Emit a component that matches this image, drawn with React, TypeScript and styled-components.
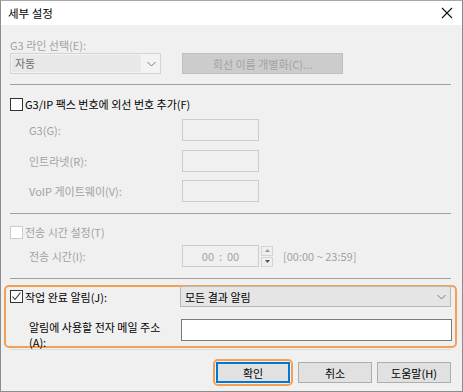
import styled, { createGlobalStyle } from "styled-components";

const GlobalStyle = createGlobalStyle`
  html, body { margin: 0; padding: 0; background: #ffffff; }
  * { box-sizing: border-box; }
`;

const font = `"Noto Sans CJK KR", "Noto Sans", sans-serif`;
const disabledText = "#a2a2a2";

const Window = styled.div`
  width: 463px;
  height: 392px;
  border: 1px solid #8c8c8c;
  border-top-color: #a8a8a8;
  background: #f0f0f0;
  display: flex;
  flex-direction: column;
  font-family: ${font};
  font-size: 11px;
  line-height: 14px;
  color: #000;
`;

const TitleBar = styled.div`
  height: 24px;
  background: #ffffff;
  display: flex;
  align-items: center;
  justify-content: space-between;
  padding: 0 7px 0 7px;
  font-size: 11.5px;
  flex-shrink: 0;
`;

const CloseIcon = styled.svg`
  width: 12px;
  height: 12px;
  margin-right: 2px;
`;

const Body = styled.div`
  flex: 1;
  padding: 0 11px 0 9px;
  display: flex;
  flex-direction: column;
`;

const Label = styled.div<{ $disabled?: boolean; $top?: number; $width?: number }>`
  color: ${(p) => (p.$disabled ? disabledText : "#000")};
  margin-top: ${(p) => p.$top ?? 0}px;
  width: ${(p) => (p.$width ? `${p.$width}px` : "auto")};
  white-space: nowrap;
`;

const Row = styled.div<{ $top?: number; $align?: string }>`
  display: flex;
  align-items: ${(p) => p.$align ?? "center"};
  margin-top: ${(p) => p.$top ?? 0}px;
`;

const Select = styled.div<{ $width: number; $disabled?: boolean }>`
  width: ${(p) => p.$width}px;
  height: 21px;
  border: 1px solid ${(p) => (p.$disabled ? "#d4d4d4" : "#b8b8b8")};
  background: ${(p) => (p.$disabled ? "#f3f3f3" : "#e5e5e5")};
  display: flex;
  align-items: center;
  justify-content: space-between;
  padding: 0 4px 0 4px;
  color: ${(p) => (p.$disabled ? "#6d6d6d" : "#000")};
`;

const SelectValue = styled.span<{ $disabled?: boolean }>`
  background: ${(p) => (p.$disabled ? "#e8e8e8" : "transparent")};
  flex: 1;
  height: 17px;
  line-height: 17px;
  margin-left: -3px;
  padding-left: 3px;
  margin-right: 6px;
`;

const Chevron = styled.svg`
  width: 9px;
  height: 6px;
  flex-shrink: 0;
`;

const DisabledButton = styled.div`
  width: 161px;
  height: 21px;
  margin-left: 21px;
  border: 1px solid #bfbfbf;
  background: #cccccc;
  color: ${disabledText};
  display: flex;
  align-items: center;
  justify-content: center;
`;

const Separator = styled.div<{ $top: number; $light?: boolean }>`
  height: 1px;
  margin-top: ${(p) => p.$top}px;
  background: ${(p) => (p.$light ? "#dcdcdc" : "#a0a0a0")};
`;

const Check = styled.span<{ $disabled?: boolean }>`
  width: 13px;
  height: 13px;
  border: 1px solid ${(p) => (p.$disabled ? "#cccccc" : "#333333")};
  background: #ffffff;
  display: inline-flex;
  align-items: center;
  justify-content: center;
  margin-right: 2px;
  flex-shrink: 0;
`;

const FieldLabel = styled.div<{ $disabled?: boolean }>`
  width: 172px;
  padding-left: 19px;
  color: ${(p) => (p.$disabled ? disabledText : "#000")};
  white-space: nowrap;
`;

const TextBox = styled.div<{ $width: number; $disabled?: boolean }>`
  width: ${(p) => p.$width}px;
  height: 22px;
  border: 1px solid ${(p) => (p.$disabled ? "#cccccc" : "#7a7a7a")};
  background: ${(p) => (p.$disabled ? "#f0f0f0" : "#ffffff")};
  display: flex;
  align-items: center;
  justify-content: center;
  color: ${disabledText};
  flex-shrink: 0;
`;

const Spinner = styled.div`
  display: flex;
  flex-direction: column;
  gap: 1px;
  margin-left: 2px;
`;

const SpinHalf = styled.div`
  width: 12px;
  height: 10px;
  border: 1px solid #d4d4d4;
  background: #efefef;
  display: flex;
  align-items: center;
  justify-content: center;
`;

const Range = styled.span`
  color: ${disabledText};
  margin-left: 10px;
`;

const Highlight = styled.div`
  margin: 6px -6px 0 -6px;
  height: 63px;
  flex-shrink: 0;
  border: 2px solid #f4a054;
  border-radius: 5px;
  padding: 0 3px 0 4px;
  display: flex;
  flex-direction: column;
`;

const EmailLabel = styled.div`
  width: 172px;
  padding-left: 19px;
  padding-top: 1px;
  line-height: 15px;
`;

const Buttons = styled.div`
  display: flex;
  justify-content: flex-end;
  align-items: center;
  gap: 5px;
  margin-top: 9px;
`;

const FocusRing = styled.div`
  border: 2px solid #f4a054;
  border-radius: 5px;
  padding: 1px;
`;

const Button = styled.div<{ $primary?: boolean }>`
  width: 74px;
  height: 21px;
  border: ${(p) => (p.$primary ? "2px solid #0078d7" : "1px solid #adadad")};
  background: #e1e1e1;
  display: flex;
  align-items: center;
  justify-content: center;
`;

const DownChevron = () => (
  <Chevron viewBox="0 0 9 6">
    <path d="M0.5 1 L4.5 5 L8.5 1" fill="none" stroke="#7a7a7a" strokeWidth="1" />
  </Chevron>
);

export default function App() {
  return (
    <>
      <GlobalStyle />
      <Window>
        <TitleBar>
          <span>세부 설정</span>
          <CloseIcon viewBox="0 0 12 12">
            <path d="M1 1 L11 11 M11 1 L1 11" stroke="#111" strokeWidth="1.1" />
          </CloseIcon>
        </TitleBar>
        <Body>
          <Label $disabled $top={13}>G3 라인 선택(E):</Label>
          <Row $top={1}>
            <Select $width={151} $disabled>
              <SelectValue $disabled>자동</SelectValue>
              <DownChevron />
            </Select>
            <DisabledButton>회선 이름 개별화(C)...</DisabledButton>
          </Row>

          <Separator $top={10} />

          <Row $top={12}>
            <Check />
            <span>G3/IP 팩스 번호에 외선 번호 추가(F)</span>
          </Row>
          <Row $top={8}>
            <FieldLabel $disabled>G3(G):</FieldLabel>
            <TextBox $width={77} $disabled />
          </Row>
          <Row $top={9}>
            <FieldLabel $disabled>인트라넷(R):</FieldLabel>
            <TextBox $width={77} $disabled />
          </Row>
          <Row $top={8}>
            <FieldLabel $disabled>VoIP 게이트웨이(V):</FieldLabel>
            <TextBox $width={77} $disabled />
          </Row>

          <Separator $top={11} />

          <Row $top={11}>
            <Check $disabled />
            <Label $disabled>전송 시간 설정(T)</Label>
          </Row>
          <Row $top={6}>
            <FieldLabel $disabled>전송 시간(I):</FieldLabel>
            <TextBox $width={77} $disabled>00&nbsp;&nbsp;:&nbsp;&nbsp;00</TextBox>
            <Spinner>
              <SpinHalf>
                <svg width="5" height="3" viewBox="0 0 5 3">
                  <path d="M0 3 L2.5 0 L5 3 Z" fill="#9a9a9a" />
                </svg>
              </SpinHalf>
              <SpinHalf>
                <svg width="5" height="3" viewBox="0 0 5 3">
                  <path d="M0 0 L2.5 3 L5 0 Z" fill="#555" />
                </svg>
              </SpinHalf>
            </Spinner>
            <Range>[00:00 ~ 23:59]</Range>
          </Row>

          <Separator $top={11} />

          <Highlight>
            <Row $top={-1}>
              <Check>
                <svg width="11" height="11" viewBox="0 0 11 11">
                  <path d="M1.5 5.5 L4 8.5 L9.5 1.5" fill="none" stroke="#333" strokeWidth="1.1" />
                </svg>
              </Check>
              <Label $width={155}>작업 완료 알림(J):</Label>
              <Select $width={271}>
                <span>모든 결과 알림</span>
                <DownChevron />
              </Select>
            </Row>
            <Row $top={12} $align="flex-start">
              <EmailLabel>
                알림에 사용할 전자 메일 주소
                <br />
                (A):
              </EmailLabel>
              <TextBox $width={271} />
            </Row>
          </Highlight>

          <Separator $top={1} $light />

          <Buttons>
            <FocusRing>
              <Button $primary>확인</Button>
            </FocusRing>
            <Button>취소</Button>
            <Button>도움말(H)</Button>
          </Buttons>
        </Body>
      </Window>
    </>
  );
}
